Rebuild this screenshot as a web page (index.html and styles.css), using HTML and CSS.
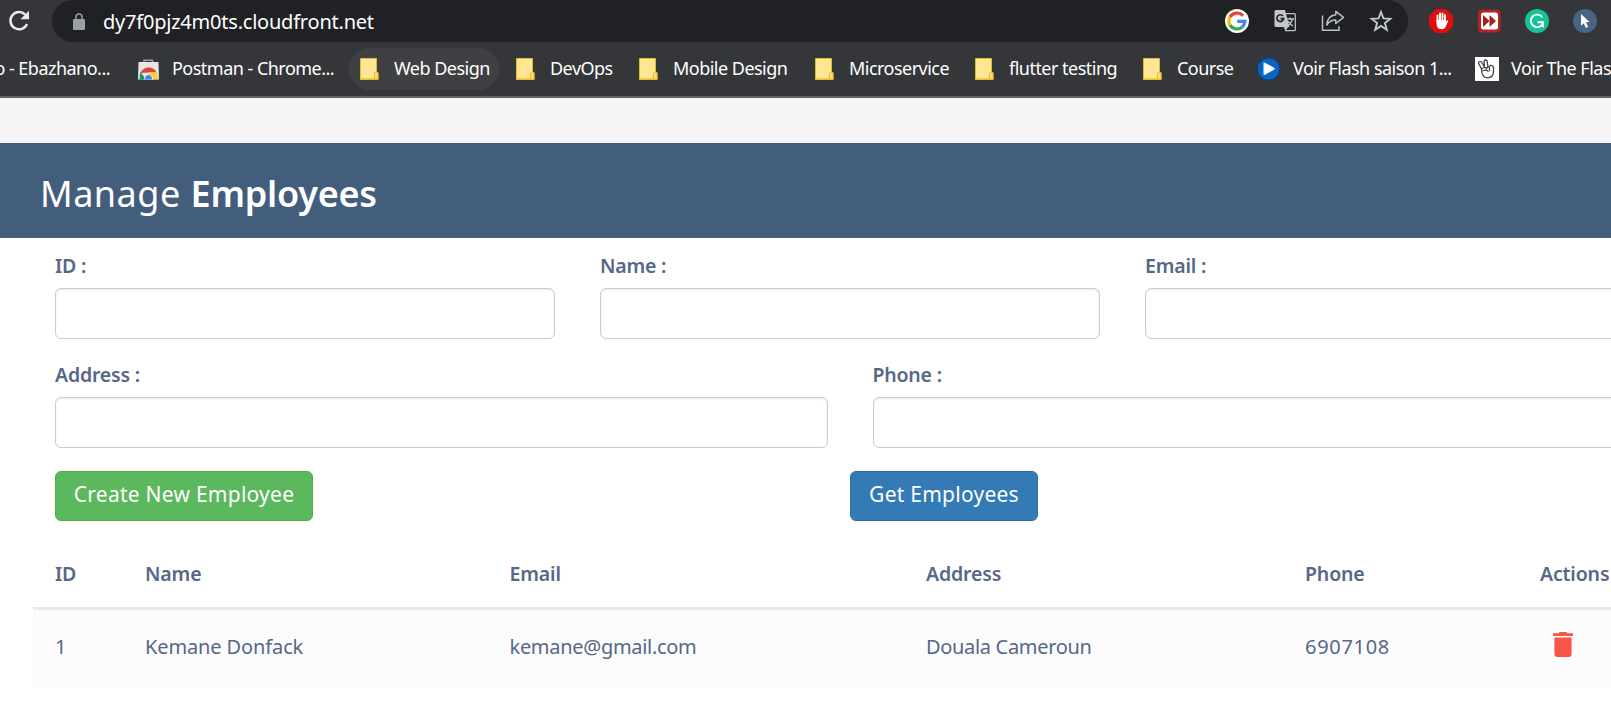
FILE: index.html
```html
<!DOCTYPE html>
<html lang="en">
<head>
<meta charset="utf-8">
<title>Manage Employees</title>
<link rel="stylesheet" href="styles.css">
</head>
<body>
<svg class="defs" width="0" height="0">
  <symbol id="folder" viewBox="0 0 19 22"><path d="M.5.5h16v14h1.500v6.500H.5z" fill="#ffe694" stroke="#e3b832"/><path d="M14.500 21v-5.500q0-1.500 1.750-1.500t1.750 1.500V21" fill="#ffdc6e" stroke="#e3b832"/><path d="M0 21.200h18.500" stroke="#efc32f" stroke-width="1.500"/></symbol>
</svg>
<header class="browser">
  <div class="toolbar">
    <svg class="reload" width="22" height="22" viewBox="0 0 22 22"><path d="M17.300 4.700A8.600 8.600 0 1 0 19 14" fill="none" stroke="#e8eaed" stroke-width="2.500"/><path d="M21 .8v8.500h-8.500z" fill="#e8eaed"/></svg>
    <div class="omnibox">
      <svg class="lock" width="12" height="17" viewBox="0 0 12 17"><rect y="6" width="12" height="11" rx="1" fill="#9aa0a6"/><path d="M3 7V4a3 3 0 0 1 6 0v3" fill="none" stroke="#9aa0a6" stroke-width="1.500"/></svg>
      <span class="url">dy7f0pjz4m0ts.cloudfront.net</span>
      <div class="page-actions">
        <svg width="24" height="24" viewBox="0 0 24 24"><circle cx="12" cy="12" r="12" fill="#fff"/><g fill="none" stroke-width="3.200"><path d="M18 6.800A8 8 0 0 0 5 8" stroke="#ea4335"/><path d="M5 8a8 8 0 0 0 0 8" stroke="#fbbc05"/><path d="M5 16a8 8 0 0 0 12.200 2" stroke="#34a853"/><path d="M17.200 18a8 8 0 0 0 2.700-5.700H12.200" stroke="#4285f4"/></g></svg>
        <svg width="24" height="24" viewBox="0 0 24 24"><path d="M12 4.700h9.300a1 1 0 0 1 1 1v15a1 1 0 0 1-1 1H12" fill="none" stroke="#bdc1c6" stroke-width="1.300"/><path d="M3 1h9l4.500 17H3a1.500 1.500 0 0 1-1.500-1.500v-14A1.500 1.500 0 0 1 3 1z" fill="#c4c7c9"/><path d="M10 17h6l-3.500 4.700z" fill="#bdc1c6"/><path d="M10 7A3.400 3.400 0 1 0 10.700 9.700H7.500" fill="none" stroke="#202124" stroke-width="1.700"/><path d="M14 10h7M17.300 8.500v1.500M19.500 10q-1 4-4.500 7M15 12q2 3.500 5 5" fill="none" stroke="#bdc1c6" stroke-width="1.400"/></svg>
        <svg width="24" height="24" viewBox="0 0 24 24"><path d="M1.500 6.500V21.300H18v-4" fill="none" stroke="#bdc1c6" stroke-width="1.500"/><path d="M14.800 2.300l7.700 6-7.700 6.200v-3.500q-6 0-9 5 .5-9.500 9-10.300z" fill="none" stroke="#bdc1c6" stroke-width="1.500" stroke-linejoin="round"/></svg>
        <svg width="24" height="24" viewBox="0 0 24 24"><path d="M12 3l2.400 6.400 6.900.4-5.400 4.300 1.900 6.700-5.800-3.800-5.800 3.800 1.900-6.700L2.700 9.800l6.900-.4z" fill="none" stroke="#c4c7c9" stroke-width="1.900"/></svg>
      </div>
    </div>
    <div class="extensions">
      <svg width="24" height="24" viewBox="0 0 24 24"><path d="M7 0h10l7 7v10l-7 7H7l-7-7V7z" fill="#e40d0d"/><path d="M8.500 13V6.500M11 12V4.400M13.500 12V4.400M16 13V6" stroke="#fff" stroke-width="1.900" stroke-linecap="round"/><path d="M7.600 11h9.400v2l1-1.500q1.200-.7 1.200.4L17 17q-1.200 3.200-4.300 3.200Q7.600 20.200 7.600 15z" fill="#fff"/></svg>
      <svg width="24" height="24" viewBox="0 0 24 24"><rect x="1" y=".5" width="22.500" height="23" rx="4" fill="#b5221f"/><rect x="4" y="3.500" width="17" height="17" rx="2.500" fill="#fff"/><path d="M6 6l6.500 6L6 18zM12.500 6l6.500 6-6.500 6z" fill="#a91e1b"/></svg>
      <svg width="24" height="24" viewBox="0 0 24 24"><circle cx="12" cy="12" r="12" fill="#15c39a"/><path d="M17.300 8.300A6.300 6.300 0 1 0 17.600 15M12.500 13.200h5.500v5" fill="none" stroke="#fff" stroke-width="1.900"/></svg>
      <svg width="24" height="24" viewBox="0 0 24 24"><circle cx="12" cy="12" r="12" fill="#4a6484"/><path d="M8 5l8.500 8-3.600.2 2.300 4.800-2.300 1-2.200-4.800L8 16.700z" fill="#fff"/></svg>
    </div>
  </div>
  <nav class="bookmarks">
    <a class="mark first"><span>o - Ebazhano...</span></a>
    <a class="mark store"><svg width="21" height="21" viewBox="0 0 21 21"><path d="M6 4V1.200h8.500V4" fill="none" stroke="#9a9da1" stroke-width="1.500"/><path d="M.5 3h20l.5 17.500H0z" fill="#e5e6e8"/><path d="M2.500 14q2.500-5.500 8-5.500 6 0 8 5h-8z" fill="#db4437"/><path d="M2.500 13Q1.500 16 1.500 20.500H8z" fill="#0f9d58"/><path d="M11 13.200h7.800q1 3 .9 7.300H12z" fill="#ffcd40"/><path d="M6 20.500a4.500 4.500 0 1 1 9 0z" fill="#fff"/><path d="M7 20.500a3.600 3.600 0 1 1 7 0z" fill="#4285f4"/></svg><span>Postman - Chrome...</span></a>
    <a class="mark hovered"><svg width="19" height="22"><use href="#folder"/></svg><span>Web Design</span></a>
    <a class="mark"><svg width="19" height="22"><use href="#folder"/></svg><span>DevOps</span></a>
    <a class="mark"><svg width="19" height="22"><use href="#folder"/></svg><span>Mobile Design</span></a>
    <a class="mark"><svg width="19" height="22"><use href="#folder"/></svg><span>Microservice</span></a>
    <a class="mark"><svg width="19" height="22"><use href="#folder"/></svg><span>flutter testing</span></a>
    <a class="mark"><svg width="19" height="22"><use href="#folder"/></svg><span>Course</span></a>
    <a class="mark site"><svg width="24" height="24" viewBox="0 0 24 24"><circle cx="11.500" cy="12" r="11.200" fill="#0865c2" stroke="#063e80"/><path d="M6.500 6.500q0-1.500 1.500-.8l9 5q1.200 1 0 2l-9 5q-1.500.7-1.500-.8z" fill="#fff"/></svg><span>Voir Flash saison 1...</span></a>
    <a class="mark site"><svg width="24" height="24" viewBox="0 0 24 24"><path fill="#fff" d="M0 0h24v24H0z"/><g fill="#fff" stroke="#444" stroke-width="1.300" stroke-linejoin="round"><path d="M6.500 12L3.500 6q.5-2.500 3-1L9.500 10 9 4q1.500-2 3.200 0l.8 7z"/><path d="M6.500 12q3-2.500 5-1l4-2.500q2.500-.5 3 2v4q0 6-6 6.300-6 0-6-8.800z"/><path d="M11.500 11v3M14.500 10v4M7.500 14q4-2 6 1"/></g></svg><span>Voir The Flash</span></a>
  </nav>
</header>
<main class="page">
  <section class="card">
    <div class="title"><h1>Manage <b>Employees</b></h1></div>
    <form class="form">
      <div class="row thirds">
        <label class="field"><span>ID :</span><input type="text"></label>
        <label class="field"><span>Name :</span><input type="text"></label>
        <label class="field"><span>Email :</span><input type="text"></label>
      </div>
      <div class="row halves">
        <label class="field"><span>Address :</span><input type="text"></label>
        <label class="field"><span>Phone :</span><input type="text"></label>
      </div>
      <div class="row buttons">
        <div><button type="button" class="btn create">Create New Employee</button></div>
        <div><button type="button" class="btn get">Get Employees</button></div>
      </div>
    </form>
    <div class="table">
      <div class="tr head"><span>ID</span><span>Name</span><span>Email</span><span>Address</span><span>Phone</span><span>Actions</span></div>
      <div class="tr"><span>1</span><span class="name">Kemane Donfack</span><span class="mail">kemane@gmail.com</span><span class="address">Douala Cameroun</span><span class="phone">6907108</span><span class="action"><svg width="20" height="25" viewBox="0 0 20 25"><path d="M0 1.200h5.500L6.700 0h6.600l1.200 1.200H20V4H0zM1.400 5.500h17.200V22q0 3-3 3H4.400q-3 0-3-3z" fill="#f8554a"/></svg></span></div>
    </div>
  </section>
</main>
</body>
</html>
```
FILE: styles.css
```css
* { box-sizing: border-box; }
body { margin: 0; width: 1611px; height: 705px; overflow: hidden; background: #f5f5f5; font-family: "Noto Sans", sans-serif; }
svg { display: block; flex: none; }
.defs { position: absolute; }

.browser { height: 98px; background: #35363a; border-bottom: 2px solid #606164; color: #fff; }
.toolbar { height: 42px; display: flex; align-items: center; }
.reload { margin: 0 22px 0 8px; }
.omnibox { width: 1356px; height: 42px; border-radius: 21px; background: #202124; display: flex; align-items: center; padding-left: 21px; }
.lock { margin-right: 18px; }
.url { font-size: 20px; letter-spacing: -0.22px; white-space: nowrap; }
.page-actions { margin-left: auto; margin-right: 15px; display: flex; gap: 24px; }
.extensions { margin-left: 21px; display: flex; gap: 24px; }

.bookmarks { height: 54px; display: grid; grid-template-columns: 138px 223px 156px 123px 176px 160px 168px 114px 218px 135px; align-items: center; }
.mark { display: flex; align-items: center; height: 42px; white-space: nowrap; font-size: 18px; letter-spacing: -0.52px; }
.mark svg { margin-right: 15px; margin-left: -1px; }
.mark span { line-height: 24px; padding-bottom: 2px; }
.mark.store svg { margin: 0 13px 0 0; }
.mark.site svg { margin: 0 12px 0 -1px; }
.mark.first { width: 110px; justify-content: flex-end; overflow: hidden; }
.mark.hovered { width: 150px; margin-left: -12px; padding-left: 12px; border-radius: 21px; background: #3f4043; }

.page { padding-top: 45px; overflow: hidden; }
.card { width: 1700px; height: 562px; background: #fff; color: #566787; }
.title { height: 95px; background: #435d7d; color: #fff; padding: 26px 0 0 40px; }
.title h1 { margin: 0; font-size: 36px; line-height: 50px; font-weight: 400; letter-spacing: 0.5px; }
.title b { font-weight: 600; letter-spacing: -0.25px; }

.form { width: 1635px; margin-left: 32.5px; padding-top: 13px; }
.row { display: grid; }
.thirds { grid-template-columns: repeat(3, 1fr); height: 109px; }
.halves { grid-template-columns: repeat(2, 1fr); height: 111px; }
.buttons { grid-template-columns: repeat(2, 1fr); height: 50px; }
.buttons > div:first-child { padding-left: 22.5px; }
.field { padding: 0 22.5px; display: block; font-size: 19.5px; font-weight: 600; letter-spacing: -0.2px; }
.field span { display: block; height: 37px; line-height: 30px; }
.field input { display: block; width: 100%; height: 51px; border: 1px solid #ccc; border-radius: 6px; background: #fff; box-shadow: inset 0 1px 2px rgba(0, 0, 0, .09); }
.btn { height: 50px; border-radius: 6px; color: #fff; font: 400 21px/45px "Noto Sans", sans-serif; letter-spacing: 0.25px; padding: 0 0 4px; white-space: nowrap; }
.create { width: 258px; background: #5cb85c; border: 1px solid #4cae4c; }
.get { width: 188px; background: #337ab7; border: 1px solid #2e6da4; }

.table { margin-left: 33px; font-size: 20px; }
.tr { display: grid; grid-template-columns: 90px 364.5px 416.500px 379px 235px 1fr; padding-left: 22px; height: 78px; line-height: 74px; background: #fcfcfc; white-space: nowrap; }
.tr.head { height: 89px; line-height: 105px; background: #fff; border-bottom: 3px solid #e9e9e9; font-size: 19.5px; font-weight: 600; letter-spacing: -0.15px; }
.name { letter-spacing: -0.12px; }
.mail { letter-spacing: -0.3px; }
.address { letter-spacing: -0.32px; }
.phone { letter-spacing: 0.7px; }
.action { padding: 22px 0 0 13px; }
```
